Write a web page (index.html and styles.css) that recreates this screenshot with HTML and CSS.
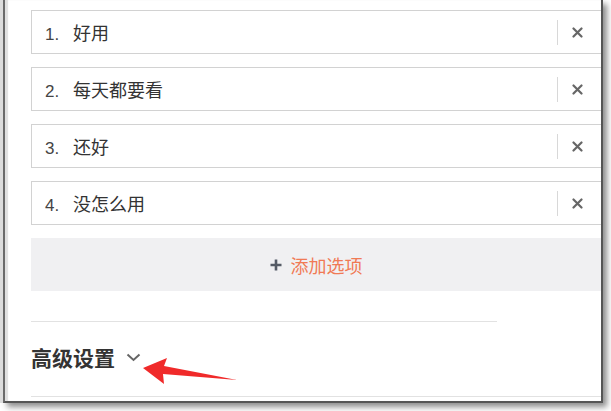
FILE: index.html
```html
<!DOCTYPE html>
<html lang="zh-CN">
<head>
    <meta charset="UTF-8">
    <title>选项设置</title>
    <link rel="stylesheet" href="styles.css">
</head>
<body>
    <div class="window">
        <div class="content">
            <!-- 选项列表 -->
            <div class="option-list">
                <div class="option-row">
                    <div class="option-label"><span class="option-num">1.</span><span class="option-text">好用</span></div>
                    <span class="option-del">
                        <svg width="11" height="11" viewBox="0 0 11 11"><path d="M1.5 1.5 L9.5 9.5 M9.5 1.5 L1.5 9.5" stroke="#666" stroke-width="2.2" stroke-linecap="round"/></svg>
                    </span>
                </div>
                <div class="option-row">
                    <div class="option-label"><span class="option-num">2.</span><span class="option-text">每天都要看</span></div>
                    <span class="option-del">
                        <svg width="11" height="11" viewBox="0 0 11 11"><path d="M1.5 1.5 L9.5 9.5 M9.5 1.5 L1.5 9.5" stroke="#666" stroke-width="2.2" stroke-linecap="round"/></svg>
                    </span>
                </div>
                <div class="option-row">
                    <div class="option-label"><span class="option-num">3.</span><span class="option-text">还好</span></div>
                    <span class="option-del">
                        <svg width="11" height="11" viewBox="0 0 11 11"><path d="M1.5 1.5 L9.5 9.5 M9.5 1.5 L1.5 9.5" stroke="#666" stroke-width="2.2" stroke-linecap="round"/></svg>
                    </span>
                </div>
                <div class="option-row">
                    <div class="option-label"><span class="option-num">4.</span><span class="option-text">没怎么用</span></div>
                    <span class="option-del">
                        <svg width="11" height="11" viewBox="0 0 11 11"><path d="M1.5 1.5 L9.5 9.5 M9.5 1.5 L1.5 9.5" stroke="#666" stroke-width="2.2" stroke-linecap="round"/></svg>
                    </span>
                </div>
            </div>

            <!-- 添加选项 -->
            <div class="add-option">
                <span class="add-plus">
                    <svg width="12" height="12" viewBox="0 0 12 12"><path d="M6 0.5 V11.5 M0.5 6 H11.5" stroke="#555b66" stroke-width="2.6"/></svg>
                </span>
                <span class="add-text">添加选项</span>
            </div>

            <div class="divider"></div>

            <!-- 高级设置 -->
            <div class="advanced">
                <span class="advanced-title">高级设置</span>
                <svg class="advanced-arrow" width="15" height="9" viewBox="0 0 15 9"><path d="M1.5 1.5 L7.5 7 L13.5 1.5" fill="none" stroke="#666" stroke-width="2"/></svg>
            </div>

            <div class="bottom-line"></div>
        </div>

        <!-- 标注箭头 -->
        <svg class="mark-arrow" width="100" height="30" viewBox="0 0 100 30">
            <polygon points="0,10 24,0 21,8 94,22 20,16 21,26" fill="#f02a2a"/>
        </svg>
    </div>
</body>
</html>
```

FILE: styles.css
```css
* {
    margin: 0;
    padding: 0;
    box-sizing: border-box;
}

body {
    width: 611px;
    height: 411px;
    background-color: #fff;
    font-family: "Liberation Sans", "Noto Sans CJK SC", sans-serif;
    color: #333;
    overflow: hidden;
}

/* Window frame */
.window {
    position: relative;
    margin-left: 3px;
    width: 600px;
    height: 403px;
    background-color: #fff;
    border-left: 2px solid #6a6a6a;
    border-right: 2px solid #555;
    border-bottom: 2px solid #555;
    box-shadow: -3px 0 0 #dcdcdc, inset 3px 0 1px #e0e0e0, 4px 4px 6px rgba(0, 0, 0, 0.45);
    overflow: hidden;
}

.content {
    padding: 10px 0 0 26px;
}

/* Options */
.option-list {
    display: flex;
    flex-direction: column;
    gap: 13px;
}

.option-row {
    display: flex;
    align-items: center;
    height: 44px;
    border: 1px solid #d2d2d2;
    border-right: none;
    background-color: #fff;
    font-size: 18px;
}

.option-label {
    flex: 1;
    display: flex;
    align-items: baseline;
}

.option-num {
    width: 41px;
    padding-left: 13px;
    font-size: 17px;
    color: #444;
}

.option-text {
    color: #333;
}

.option-del {
    display: flex;
    align-items: center;
    width: 44px;
    height: 25px;
    padding-left: 14px;
    border-left: 1px solid #d8d8d8;
}

/* Add option */
.add-option {
    display: flex;
    align-items: center;
    justify-content: center;
    gap: 9px;
    height: 53px;
    margin-top: 13px;
    background-color: #f0f0f2;
    font-size: 18px;
}

.add-plus {
    display: flex;
}

.add-text {
    color: #f07a55;
}

.divider {
    width: 466px;
    margin-top: 30px;
    border-top: 1px solid #e2e2e2;
}

/* Advanced settings */
.advanced {
    display: flex;
    align-items: center;
    gap: 11px;
    height: 28px;
    margin-top: 21px;
}

.advanced-title {
    font-size: 21px;
    font-weight: bold;
    color: #333;
}

.advanced-arrow {
    margin-top: 1px;
}

.bottom-line {
    margin-top: 25px;
    border-top: 1px solid #e2e2e2;
}

/* Annotation */
.mark-arrow {
    position: absolute;
    left: 138px;
    top: 358px;
}
```
